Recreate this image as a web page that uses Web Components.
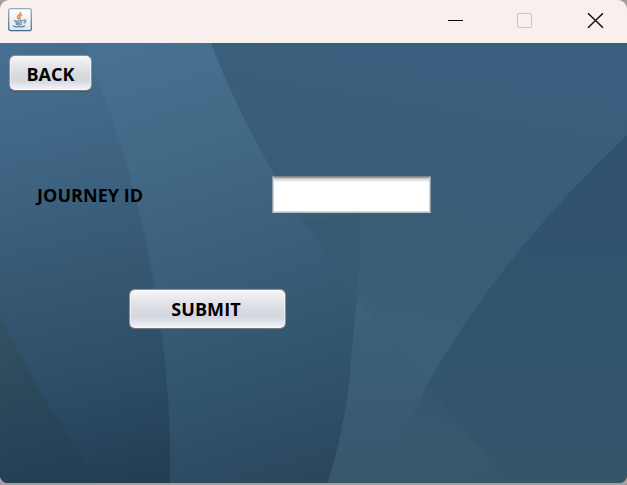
<!DOCTYPE html>
<html lang="en"><head><meta charset="utf-8"><title>Journey</title>
<style>html,body{margin:0;width:627px;height:485px;overflow:hidden;background:#a59f9f}</style></head>
<body>
<app-window>
  <title-bar slot="title"></title-bar>
  <journey-form></journey-form>
</app-window>
<script>
const define = (name, html) => customElements.define(name, class extends HTMLElement {
  constructor() { super(); this.attachShadow({mode: 'open'}).innerHTML = html; }
});

define('title-bar', `<style>
:host{display:flex;height:43px;background:#f9f0ee;align-items:flex-start;justify-content:space-between}
.java{margin:8px 0 0 8px}.controls{display:flex}svg{display:block}
</style>
<svg class="java" width="24" height="24" viewBox="0 0 24 24" fill="none">
  <defs><linearGradient id="j" x2="0" y2="1"><stop stop-color="#fff"/><stop offset="1" stop-color="#dde5ed"/></linearGradient>
  <linearGradient id="k" x2="0" y2="1"><stop stop-color="#91a9bb"/><stop offset="1" stop-color="#436986"/></linearGradient></defs>
  <rect x=".7" y=".7" width="22.6" height="22" rx="2" fill="url(#j)" stroke="url(#k)" stroke-width="1.2"/>
  <path d="M12.6 4c1 2.1-3.6 3.2-3.1 5.2.2.8 1.2 1.5 1.7 2.4M14.2 6.6c-2 .9-3 1.8-2.4 2.8.5.8.7 1.4.1 2.2" stroke="#ea8a37" stroke-width="1.5"/>
  <path d="M6.500 12.300c-1.500 1 6.200 1.200 8.800.1M7.300 14.400c1.700.9 5.200.8 7 .1M8 16.300c1.500.8 4.100.8 5.600 0M15.600 12.200c2.700-.9 2.600 2 .1 3M6.200 17.500c-3.200 1.400 7.100 2.200 10.800.3" stroke="#5f87a5" stroke-width="1.300"/>
</svg>
<svg class="controls" width="187" height="43" viewBox="440 0 187 43" fill="none">
  <path d="M448 20.500h15" stroke="#000"/>
  <rect x="517.500" y="13.500" width="14" height="14" rx="1" stroke="#c9c2c0"/>
  <path d="M588 13.200l15 14.600M603 13.200l-15 14.600" stroke="#111" stroke-width="1.500"/>
</svg>`);

define('wave-backdrop', `<style>:host{display:block}svg{display:block}</style>
<svg width="627" height="440" viewBox="0 43 627 440">
<defs>
<linearGradient id="l" gradientUnits="userSpaceOnUse" x1="20" y1="43" x2="120" y2="483"><stop stop-color="#476f90"/><stop offset=".22" stop-color="#416786"/><stop offset=".5" stop-color="#375974"/><stop offset=".75" stop-color="#2d4e68"/><stop offset="1" stop-color="#233e54"/></linearGradient>
<linearGradient id="m" gradientUnits="userSpaceOnUse" x1="150" y1="43" x2="290" y2="483"><stop stop-color="#487191"/><stop offset=".25" stop-color="#426985"/><stop offset=".5" stop-color="#3b5f7a"/><stop offset=".72" stop-color="#32566f"/><stop offset="1" stop-color="#2b475e"/></linearGradient>
<linearGradient id="u" gradientUnits="userSpaceOnUse" x1="430" y1="43" x2="380" y2="330"><stop stop-color="#3a5f7e"/><stop offset=".5" stop-color="#395c78"/><stop offset="1" stop-color="#3a5f76"/></linearGradient>
<linearGradient id="w" gradientUnits="userSpaceOnUse" x1="0" y1="297" x2="0" y2="483"><stop stop-color="#3d6279"/><stop offset=".5" stop-color="#3a5c75"/><stop offset="1" stop-color="#37576b"/></linearGradient>
<linearGradient id="r" gradientUnits="userSpaceOnUse" x1="0" y1="135" x2="0" y2="483"><stop stop-color="#305170"/><stop offset=".55" stop-color="#31546e"/><stop offset="1" stop-color="#35556a"/></linearGradient>
<linearGradient id="e" gradientUnits="userSpaceOnUse" x1="0" y1="314" x2="40" y2="483"><stop stop-color="#335263"/><stop offset="1" stop-color="#233f54"/></linearGradient>
<linearGradient id="d" gradientUnits="userSpaceOnUse" x1="427" y1="385" x2="405" y2="475"><stop stop-color="#34556c"/><stop offset="1" stop-color="#37576b" stop-opacity="0"/></linearGradient>
</defs>
<rect y="43" width="627" height="440" fill="url(#m)"/>
<path d="M0 43H82C118 118 174 290 170 483H0Z" fill="url(#l)"/>
<path d="M0 314Q32 384 100 483H0Z" fill="url(#e)"/>
<path d="M211 43C244 132 299 221 357 297L427 385L627 385V43Z" fill="url(#u)"/>
<path d="M303 221L360 215Q359 259 357 297Z" fill="#385b75"/>
<path d="M357 297L427 385L510 483H328Q348 415 351 360Z" fill="url(#w)"/>
<path d="M627 135Q500 255 427 385L510 483H627Z" fill="url(#r)"/>
<path d="M427 385Q402 431 387 475L500 473Z" fill="url(#d)"/>
</svg>`);

define('metal-button', `<style>
:host{display:flex;align-items:center;justify-content:center;box-sizing:border-box;border:1px solid #8e9196;border-bottom-color:#77777c;border-radius:6px;background:linear-gradient(#f8f8fa,#e4e5e8 30%,#d8dae0 55%,#d4d7df 72%,#f2f3fa 97%);box-shadow:inset 0 0 0 1px #ffffff70,0 0 1px 0 #8e919699,0 1px 1px #434d58aa;color:#000;font:bold 18px/24px "Open Sans","Noto Sans",sans-serif;letter-spacing:var(--track,0)}
</style><slot></slot>`);

define('text-entry', `<style>
:host{display:block;box-sizing:border-box;background:linear-gradient(#9b9b9b 0 1px,#c5c5c5 1px 2px,#dcdcdc 2px 3px,#e9e9e9 3px 4px,#f6f6f6 4px 5px,#fff 5px) padding-box;border:1px solid #92a0ab;border-top-color:#7c858c;border-bottom-color:#b7bdc1;box-shadow:inset 1px 0 #d2d2d2,inset -1px 0 #d2d2d2,inset 0 -1px #d8d8d8}
</style>`);

define('journey-form', `<style>
:host{display:grid;grid-template:440px/627px;font:bold 18px/24px "Open Sans","Noto Sans",sans-serif;color:#000}
wave-backdrop,.form{grid-area:1/1}
.form{display:flex;flex-direction:column;align-items:flex-start;padding-top:12px;z-index:1}
.back{width:83px;height:36px;margin-left:9px;padding-top:2px;--track:.05px}
.row{display:grid;grid-template-columns:235px 159px;align-items:center;margin:85px 0 0 37px}
.row label{white-space:nowrap;letter-spacing:.05px}
text-entry{height:37px}
.submit{width:157px;height:40px;margin:76px 0 0 129px;padding-right:3px;--track:.05px}
</style>
<wave-backdrop></wave-backdrop>
<div class="form"><metal-button class="back" role="button">BACK</metal-button>
<div class="row"><label>JOURNEY ID</label><text-entry></text-entry></div>
<metal-button class="submit" role="button">SUBMIT</metal-button></div>`);

define('app-window', `<style>
:host{display:block;width:627px;height:483px;border-radius:9px 9px 8px 8px;overflow:hidden}
</style><slot name="title"></slot><slot></slot>`);
</script>
</body></html>
